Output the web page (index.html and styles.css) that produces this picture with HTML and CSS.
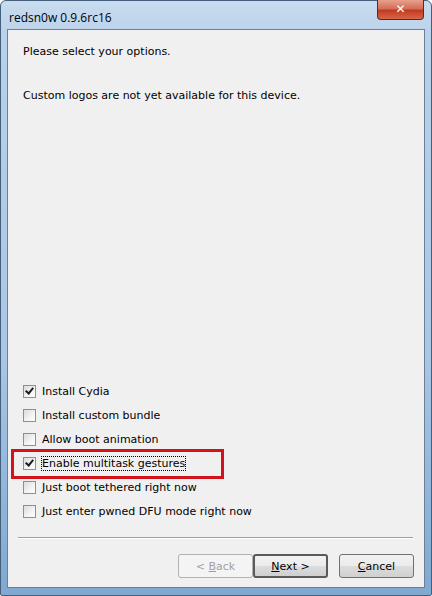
FILE: index.html
```html
<!DOCTYPE html>
<html>

<head>
  <title>redsn0w 0.9.6rc16</title>
  <link rel="stylesheet" href="styles.css">
</head>

<body>
  <div class="window">
    <div class="titlebar">
      <span class="title">redsn0w 0.9.6rc16</span>
      <span class="close">&#x2715;</span>
    </div>
    <div class="client">
      <p class="intro">Please select your options.</p>
      <p class="note">Custom logos are not yet available for this device.</p>

      <div class="options">
        <label class="option"><span class="box checked"></span>Install Cydia</label>
        <label class="option"><span class="box"></span>Install custom bundle</label>
        <label class="option"><span class="box"></span>Allow boot animation</label>
        <label class="option highlight"><span class="box checked"></span><span class="focus">Enable multitask gestures</span></label>
        <label class="option"><span class="box"></span>Just boot tethered right now</label>
        <label class="option"><span class="box"></span>Just enter pwned DFU mode right now</label>
      </div>

      <div class="separator"></div>

      <div class="buttons">
        <button class="btn" disabled>&lt; <u>B</u>ack</button>
        <button class="btn default"><u>N</u>ext &gt;</button>
        <button class="btn cancel"><u>C</u>ancel</button>
      </div>
    </div>
  </div>
</body>

</html>
```

FILE: styles.css
```css
/* Windows 7 style wizard dialog */
body {
  margin: 0;
  background-color: #ffffff;
  font-family: "DejaVu Sans", "Liberation Sans", sans-serif;
}

.window {
  width: 432px;
  height: 596px;
  box-sizing: border-box;
  display: flex;
  flex-direction: column;
  border: 1px solid #44607c;
  border-radius: 6px 6px 2px 2px;
  background: linear-gradient(180deg, #c9dcef 0%, #b9d1ea 6%, #a9c6e4 60%, #7fa9d1 100%);
}

.titlebar {
  height: 28px;
  display: flex;
  align-items: flex-start;
}

.title {
  margin: 8px 0 0 8px;
  font-family: "Open Sans", "Liberation Sans", sans-serif;
  font-size: 12px;
  color: #000000;
}

.close {
  margin: -1px 7px 0 auto;
  width: 45px;
  height: 19px;
  line-height: 19px;
  text-align: center;
  font-size: 12px;
  font-weight: bold;
  color: #ffffff;
  border: 1px solid #5b2a22;
  border-top: none;
  border-radius: 0 0 4px 4px;
  background: linear-gradient(180deg, #e8a08c 0%, #d46f57 45%, #c23b1e 55%, #d8674a 100%);
}

.client {
  flex: 1;
  margin: 0 6px 7px 6px;
  display: flex;
  flex-direction: column;
  border: 1px solid #6a7f98;
  background-color: #f0f0f0;
  font-size: 11px;
  color: #000000;
}

.intro {
  margin: 15px 0 0 15px;
}

.note {
  margin: 31px 0 0 15px;
}

.options {
  margin: auto 0 0 0;
  padding: 0 0 14px 15px;
  display: flex;
  flex-direction: column;
}

.option {
  height: 24px;
  display: flex;
  align-items: center;
  position: relative;
}

.box {
  width: 11px;
  height: 11px;
  margin-right: 6px;
  border: 1px solid #8e8f8f;
  background: linear-gradient(135deg, #dcdcdc 0%, #f4f4f4 60%, #ffffff 100%);
  position: relative;
}

.box.checked::after {
  content: "";
  position: absolute;
  left: 3px;
  top: 0px;
  width: 3px;
  height: 6px;
  border: solid #1c1c1c;
  border-width: 0 2px 2px 0;
  transform: rotate(40deg);
}

.focus {
  outline: 1px dotted #000000;
  outline-offset: 0;
}

.highlight::before {
  content: "";
  position: absolute;
  left: -12px;
  top: -2px;
  width: 207px;
  height: 24px;
  border: 3px solid #d3121a;
}

.separator {
  margin: 0 11px 0 10px;
  height: 1px;
  background-color: #a0a0a0;
  border-bottom: 1px solid #ffffff;
}

.buttons {
  display: flex;
  justify-content: flex-end;
  padding: 15px 10px 9px 0;
}

.btn {
  width: 75px;
  height: 24px;
  font-family: "DejaVu Sans", "Liberation Sans", sans-serif;
  font-size: 11px;
  color: #000000;
  border: 1px solid #707070;
  border-radius: 3px;
  background: linear-gradient(180deg, #f2f2f2 0%, #ebebeb 50%, #dddddd 51%, #cfcfcf 100%);
  padding: 0;
}

.btn[disabled] {
  color: #a0a0a0;
  border-color: #adb2b5;
  background: #f4f4f4;
}

.default {
  border: 2px solid #5a5a5a;
}

.cancel {
  margin-left: 11px;
}
```
